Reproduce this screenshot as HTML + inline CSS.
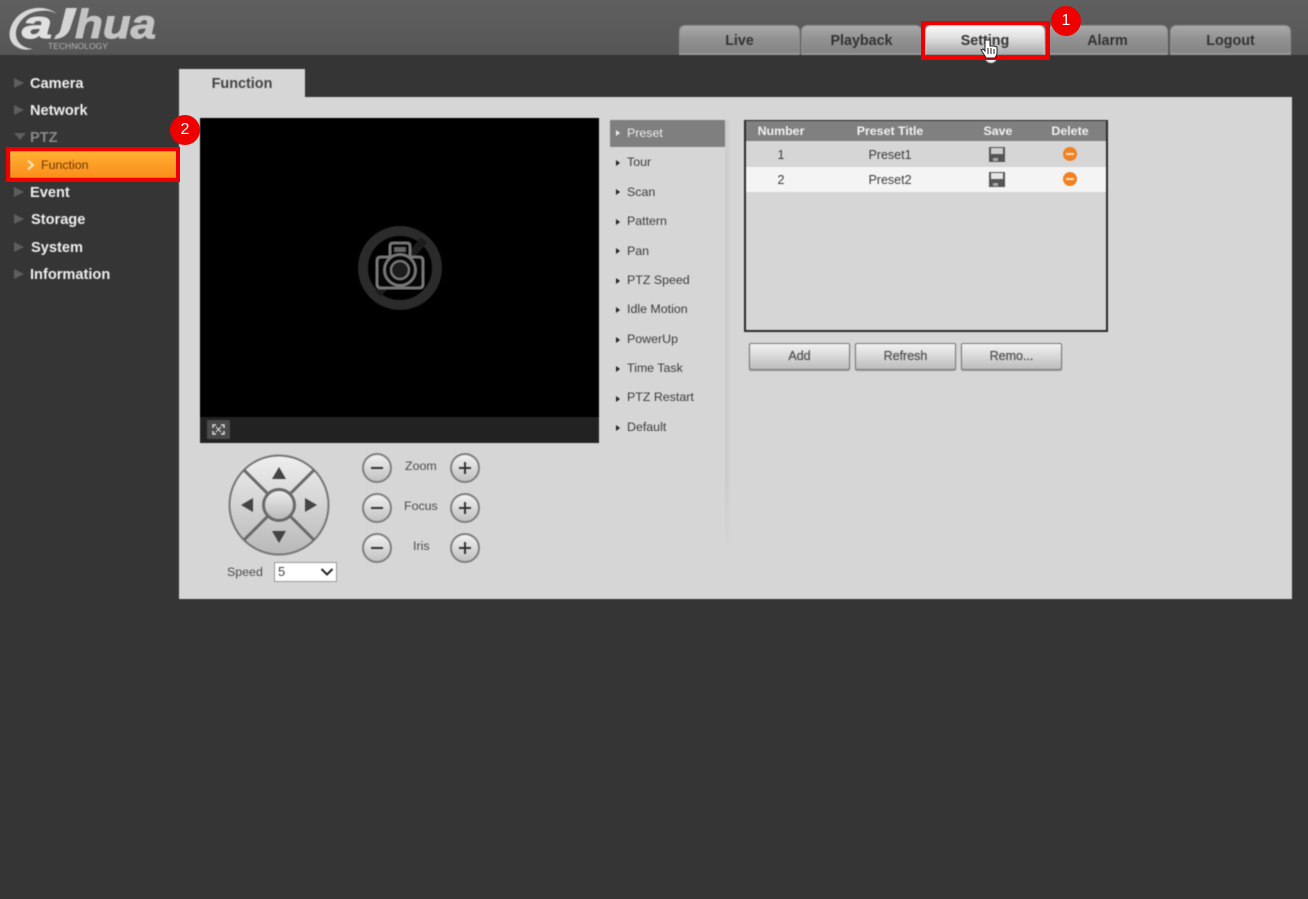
<!DOCTYPE html>
<html><head><meta charset="utf-8"><style>
html,body{margin:0;padding:0;width:1308px;height:899px;overflow:hidden;background:#353535;font-family:"Liberation Sans",sans-serif}
div,span,svg{position:absolute;box-sizing:border-box}
#w{left:0;top:0;width:1308px;height:899px;filter:blur(.45px)}
.t{white-space:nowrap;text-align:center}
#hd{left:-5px;top:-5px;width:1318px;height:60px;background:linear-gradient(#606060,#565656)}
.tab{top:25px;height:30px;width:121px;border-radius:6px 6px 0 0;background:linear-gradient(#a8a8a8,#929292 45%,#858585 90%,#a5a5a5);border:1px solid #8e8e8e;border-bottom:none;color:#333;font-weight:bold;font-size:14.3px;line-height:30px;text-align:center}
.nav{left:30px;color:#eee;font-weight:bold;font-size:14.6px;line-height:18px;white-space:nowrap}
.ar{left:14px;width:0;height:0;border-left:10px solid #5e5e5e;border-top:5px solid transparent;border-bottom:5px solid transparent}
.m{left:627px;color:#3c3c3c;font-size:12.4px;line-height:16px;white-space:nowrap}
.ma{left:616px;width:0;height:0;border-left:4px solid #222;border-top:3.5px solid transparent;border-bottom:3.5px solid transparent}
.th{top:123px;color:#f2f2f2;font-weight:bold;font-size:12.4px;line-height:16px}
.td{color:#3c3c3c;font-size:12.5px;line-height:16px}
.btn{top:343px;width:101px;height:27px;border:1px solid #777;border-radius:2px;background:linear-gradient(#f2f2f2,#bdbdbd);box-shadow:0 1px 1px #999;color:#555;font-weight:normal;font-size:12.5px;line-height:25px;text-align:center;-webkit-text-stroke:.3px #555}
.lb{color:#4c4c4c;font-size:12.4px;line-height:16px;white-space:nowrap}
.rc{width:30px;height:30px;border-radius:50%;border:2px solid #808080;background:linear-gradient(#f0f0f0,#c2c2c2);left:0}
.rc i{position:absolute;left:7px;top:12px;width:12px;height:2px;background:#333;display:block}
.rc b{position:absolute;left:12px;top:7px;width:2px;height:12px;background:#333;display:block}
.red{border:4px solid #ee0000}
.badge{width:30px;height:30px;border-radius:50%;background:#ee0000;color:#fff;font-size:17px;line-height:30px;text-align:center}
</style></head><body>
<div id="w">
<div id="hd"></div>
<svg style="left:0;top:0" width="170" height="55" viewBox="0 0 170 55">
<path d="M57 14C46 5 28 6 17 17C7 28 7 42 17 47C21 50 28 50 33 49C24 48 17 44 16 35C15 24 26 12 40 11C47 10 52 11 57 14Z" fill="#d8d8d8"/>
<text x="22" y="38" font-family="Liberation Sans" font-weight="bold" font-style="italic" font-size="39" fill="#e0e0e0" stroke="#e0e0e0" stroke-width="1" textLength="30" lengthAdjust="spacingAndGlyphs">a</text>
<path d="M66 8L77 8L70 29C67 36 61 39 54 39L56 35C59 34 60 32 61 28Z" fill="#d4d4d4"/>
<text x="75" y="38" font-family="Liberation Sans" font-weight="bold" font-style="italic" font-size="41" fill="#c4c4c4" stroke="#c4c4c4" stroke-width="1" textLength="81" lengthAdjust="spacingAndGlyphs">hua</text>
<text x="48" y="49" font-family="Liberation Sans" font-size="8" fill="#b4b4b4" textLength="60" lengthAdjust="spacingAndGlyphs">TECHNOLOGY</text>
</svg>

<div class="tab" style="left:679px">Live</div>
<div class="tab" style="left:801px">Playback</div>
<div class="tab" style="left:925px;width:120px;background:linear-gradient(#fafafa,#dcdcdc 45%,#a8a8a8);border-color:#ddd">Setting</div>
<div class="tab" style="left:1047px">Alarm</div>
<div class="tab" style="left:1170px">Logout</div>
<div style="left:985px;top:56px;width:12px;height:7px;background:#eee;border-radius:0 0 6px 6px"></div>

<div class="ar" style="top:78px"></div><div class="nav" style="top:75px">Camera</div>
<div class="ar" style="top:105px"></div><div class="nav" style="top:102px">Network</div>
<div style="left:14px;top:133px;width:0;height:0;border-top:7px solid #5e5e5e;border-left:6px solid transparent;border-right:6px solid transparent"></div><div class="nav" style="top:129px;color:#888">PTZ</div>
<div style="left:10px;top:151px;width:167px;height:27px;background:linear-gradient(#ffb232,#fb8c1c)"></div>
<svg style="left:26px;top:159px" width="10" height="12" viewBox="0 0 10 12"><path d="M2 1.500L7 6L2 10.500" fill="none" stroke="#ffe9c4" stroke-width="2"/></svg>
<div style="left:41px;top:157px;color:#6e3806;font-size:12.4px;line-height:16px">Function</div>
<div class="ar" style="top:187px"></div><div class="nav" style="top:184px">Event</div>
<div class="ar" style="top:214px"></div><div class="nav" style="top:211px;left:31px">Storage</div>
<div class="ar" style="top:242px"></div><div class="nav" style="top:239px;left:31px">System</div>
<div class="ar" style="top:269px"></div><div class="nav" style="top:266px">Information</div>

<div style="left:179px;top:69px;width:126px;height:30px;background:#d6d6d6"></div>
<div class="t" style="left:179px;top:76px;width:126px;color:#444;font-weight:bold;font-size:14.4px;line-height:16px">Function</div>
<div style="left:179px;top:97px;width:1113px;height:502px;background:#d6d6d6"></div>

<div style="left:200px;top:118px;width:399px;height:325px;background:#000"></div>
<div style="left:200px;top:417px;width:399px;height:26px;background:#222"></div>
<div style="left:207px;top:420px;width:23px;height:19px;background:#4a4a4a;border-radius:1px"></div>
<svg style="left:207px;top:420px" width="23" height="19" viewBox="0 0 23 19"><path d="M6 8V5h3M14 5h3v3M17 11v3h-3M9 14H6v-3" fill="none" stroke="#ddd" stroke-width="1.500"/><path d="M9 7l5 5M14 7l-5 5" stroke="#ddd"/></svg>
<svg style="left:340px;top:210px" width="120" height="110" viewBox="0 0 120 110">
<circle cx="60" cy="58" r="37" fill="none" stroke="#2b2b2b" stroke-width="10"/>
<path d="M84 30L38 84" stroke="#1c1c1c" stroke-width="8"/>
<path d="M50 47V36q0-3 3-3h14q3 0 3 3v11h9q4 0 4 4v23q0 4-4 4H41q-4 0-4-4V51q0-4 4-4z" fill="#060606" stroke="#777" stroke-width="3"/>
<rect x="54" y="37" width="12" height="5" fill="#666"/>
<circle cx="60" cy="60" r="15.500" fill="#060606" stroke="#777" stroke-width="3"/>
<circle cx="60" cy="60" r="9" fill="#1c1c1c" stroke="#777" stroke-width="2.500"/>
</svg>

<svg style="left:222px;top:450px" width="114" height="112" viewBox="0 0 114 112">
<defs><linearGradient id="g" x1="0" y1="0" x2="0" y2="1"><stop offset="0" stop-color="#efefef"/><stop offset="1" stop-color="#b8b8b8"/></linearGradient></defs>
<circle cx="57" cy="55" r="49.500" fill="url(#g)" stroke="#777" stroke-width="2"/>
<path d="M22 20L92 90M92 20L22 90" stroke="#6a6a6a" stroke-width="3"/>
<circle cx="57" cy="55" r="15.500" fill="url(#g)" stroke="#6a6a6a" stroke-width="3"/>
<path d="M57 17l7 12H50zM57 93l-7-12h14zM19 55l12-7v14zM95 55l-12-7v14z" fill="#444"/>
</svg>
<div class="lb" style="left:227px;top:564px">Speed</div>
<div style="left:274px;top:562px;width:63px;height:20px;background:#fff;border:1px solid #999"></div>
<div style="left:278px;top:564px;color:#444;font-size:13px;line-height:16px">5</div>
<svg style="left:320px;top:567px" width="14" height="10" viewBox="0 0 14 10"><path d="M1.500 2L7 7.500L12.500 2" fill="none" stroke="#222" stroke-width="2"/></svg>

<div class="rc" style="left:362px;top:453px"><i></i></div>
<div class="rc" style="left:362px;top:493px"><i></i></div>
<div class="rc" style="left:362px;top:533px"><i></i></div>
<div class="rc" style="left:450px;top:453px"><i></i><b></b></div>
<div class="rc" style="left:450px;top:493px"><i></i><b></b></div>
<div class="rc" style="left:450px;top:533px"><i></i><b></b></div>
<div class="lb" style="left:405px;top:458px">Zoom</div>
<div class="lb" style="left:404px;top:498px">Focus</div>
<div class="lb" style="left:413px;top:538px">Iris</div>

<div style="left:725px;top:120px;width:6px;height:430px;background:linear-gradient(90deg,#cacaca,#d6d6d6);-webkit-mask-image:linear-gradient(#000 85%,transparent)"></div>
<div style="left:610px;top:120px;width:115px;height:27px;background:#7f7f7f;border-radius:1px"></div>
<div class="ma" style="top:130px;border-left-color:#eee"></div><div class="m" style="top:125px;color:#eee">Preset</div>
<div class="ma" style="top:160px"></div><div class="m" style="top:154px">Tour</div>
<div class="ma" style="top:189px"></div><div class="m" style="top:184px">Scan</div>
<div class="ma" style="top:219px"></div><div class="m" style="top:213px">Pattern</div>
<div class="ma" style="top:248px"></div><div class="m" style="top:243px">Pan</div>
<div class="ma" style="top:278px"></div><div class="m" style="top:272px">PTZ Speed</div>
<div class="ma" style="top:307px"></div><div class="m" style="top:301px">Idle Motion</div>
<div class="ma" style="top:337px"></div><div class="m" style="top:331px">PowerUp</div>
<div class="ma" style="top:366px"></div><div class="m" style="top:360px">Time Task</div>
<div class="ma" style="top:396px"></div><div class="m" style="top:389px">PTZ Restart</div>
<div class="ma" style="top:425px"></div><div class="m" style="top:419px">Default</div>

<div style="left:744px;top:120px;width:364px;height:212px;border:1px solid #2a2a2a;border-width:1px 2px 2px 2px"></div>
<div style="left:746px;top:121px;width:360px;height:20px;background:#808080"></div>
<div style="left:746px;top:167px;width:360px;height:25px;background:#f4f4f4"></div>
<div class="th t" style="left:741px;width:80px">Number</div>
<div class="th t" style="left:840px;width:100px">Preset Title</div>
<div class="th t" style="left:968px;width:60px">Save</div>
<div class="th t" style="left:1040px;width:60px">Delete</div>
<div class="td t" style="left:761px;top:147px;width:40px">1</div>
<div class="td t" style="left:761px;top:172px;width:40px">2</div>
<div class="td t" style="left:850px;top:147px;width:80px">Preset1</div>
<div class="td t" style="left:850px;top:172px;width:80px">Preset2</div>
<svg style="left:989px;top:147px" width="16" height="15" viewBox="0 0 16 15"><path d="M0 0h16v15H0z" fill="#555"/><rect x="2" y="1" width="12" height="6" fill="#cfcfcf"/><rect x="4" y="11" width="5" height="3" fill="#aaa"/></svg>
<svg style="left:989px;top:172px" width="16" height="15" viewBox="0 0 16 15"><path d="M0 0h16v15H0z" fill="#555"/><rect x="2" y="1" width="12" height="6" fill="#e6e6e6"/><rect x="4" y="11" width="5" height="3" fill="#aaa"/></svg>
<div style="left:1063px;top:147px;width:14px;height:14px;border-radius:50%;background:#f08022"></div><div style="left:1066px;top:153px;width:8px;height:2px;background:#fde0c0"></div>
<div style="left:1063px;top:172px;width:14px;height:14px;border-radius:50%;background:#f08022"></div><div style="left:1066px;top:178px;width:8px;height:2px;background:#fde0c0"></div>

<div class="btn" style="left:749px">Add</div>
<div class="btn" style="left:855px">Refresh</div>
<div class="btn" style="left:961px">Remo...</div>
</div>

<div class="red" style="left:921px;top:21px;width:129px;height:39px"></div>
<div class="red" style="left:6px;top:147px;width:174px;height:35px"></div>
<div class="badge" style="left:1051px;top:6px;font-size:16px">1</div>
<div class="badge" style="left:170px;top:115px;font-size:16px">2</div>
<svg style="left:978px;top:38px" width="22" height="24" viewBox="0 0 22 24"><path d="M7 2v11l-2-2-2 1 4 6 1 2h9l2-4v-7l-3-1-2 0-2 0V2z" fill="#fff" stroke="#222" stroke-width="1"/><path d="M10 10v6M13 10v6M16 11v5" stroke="#222"/></svg>
</body></html>
